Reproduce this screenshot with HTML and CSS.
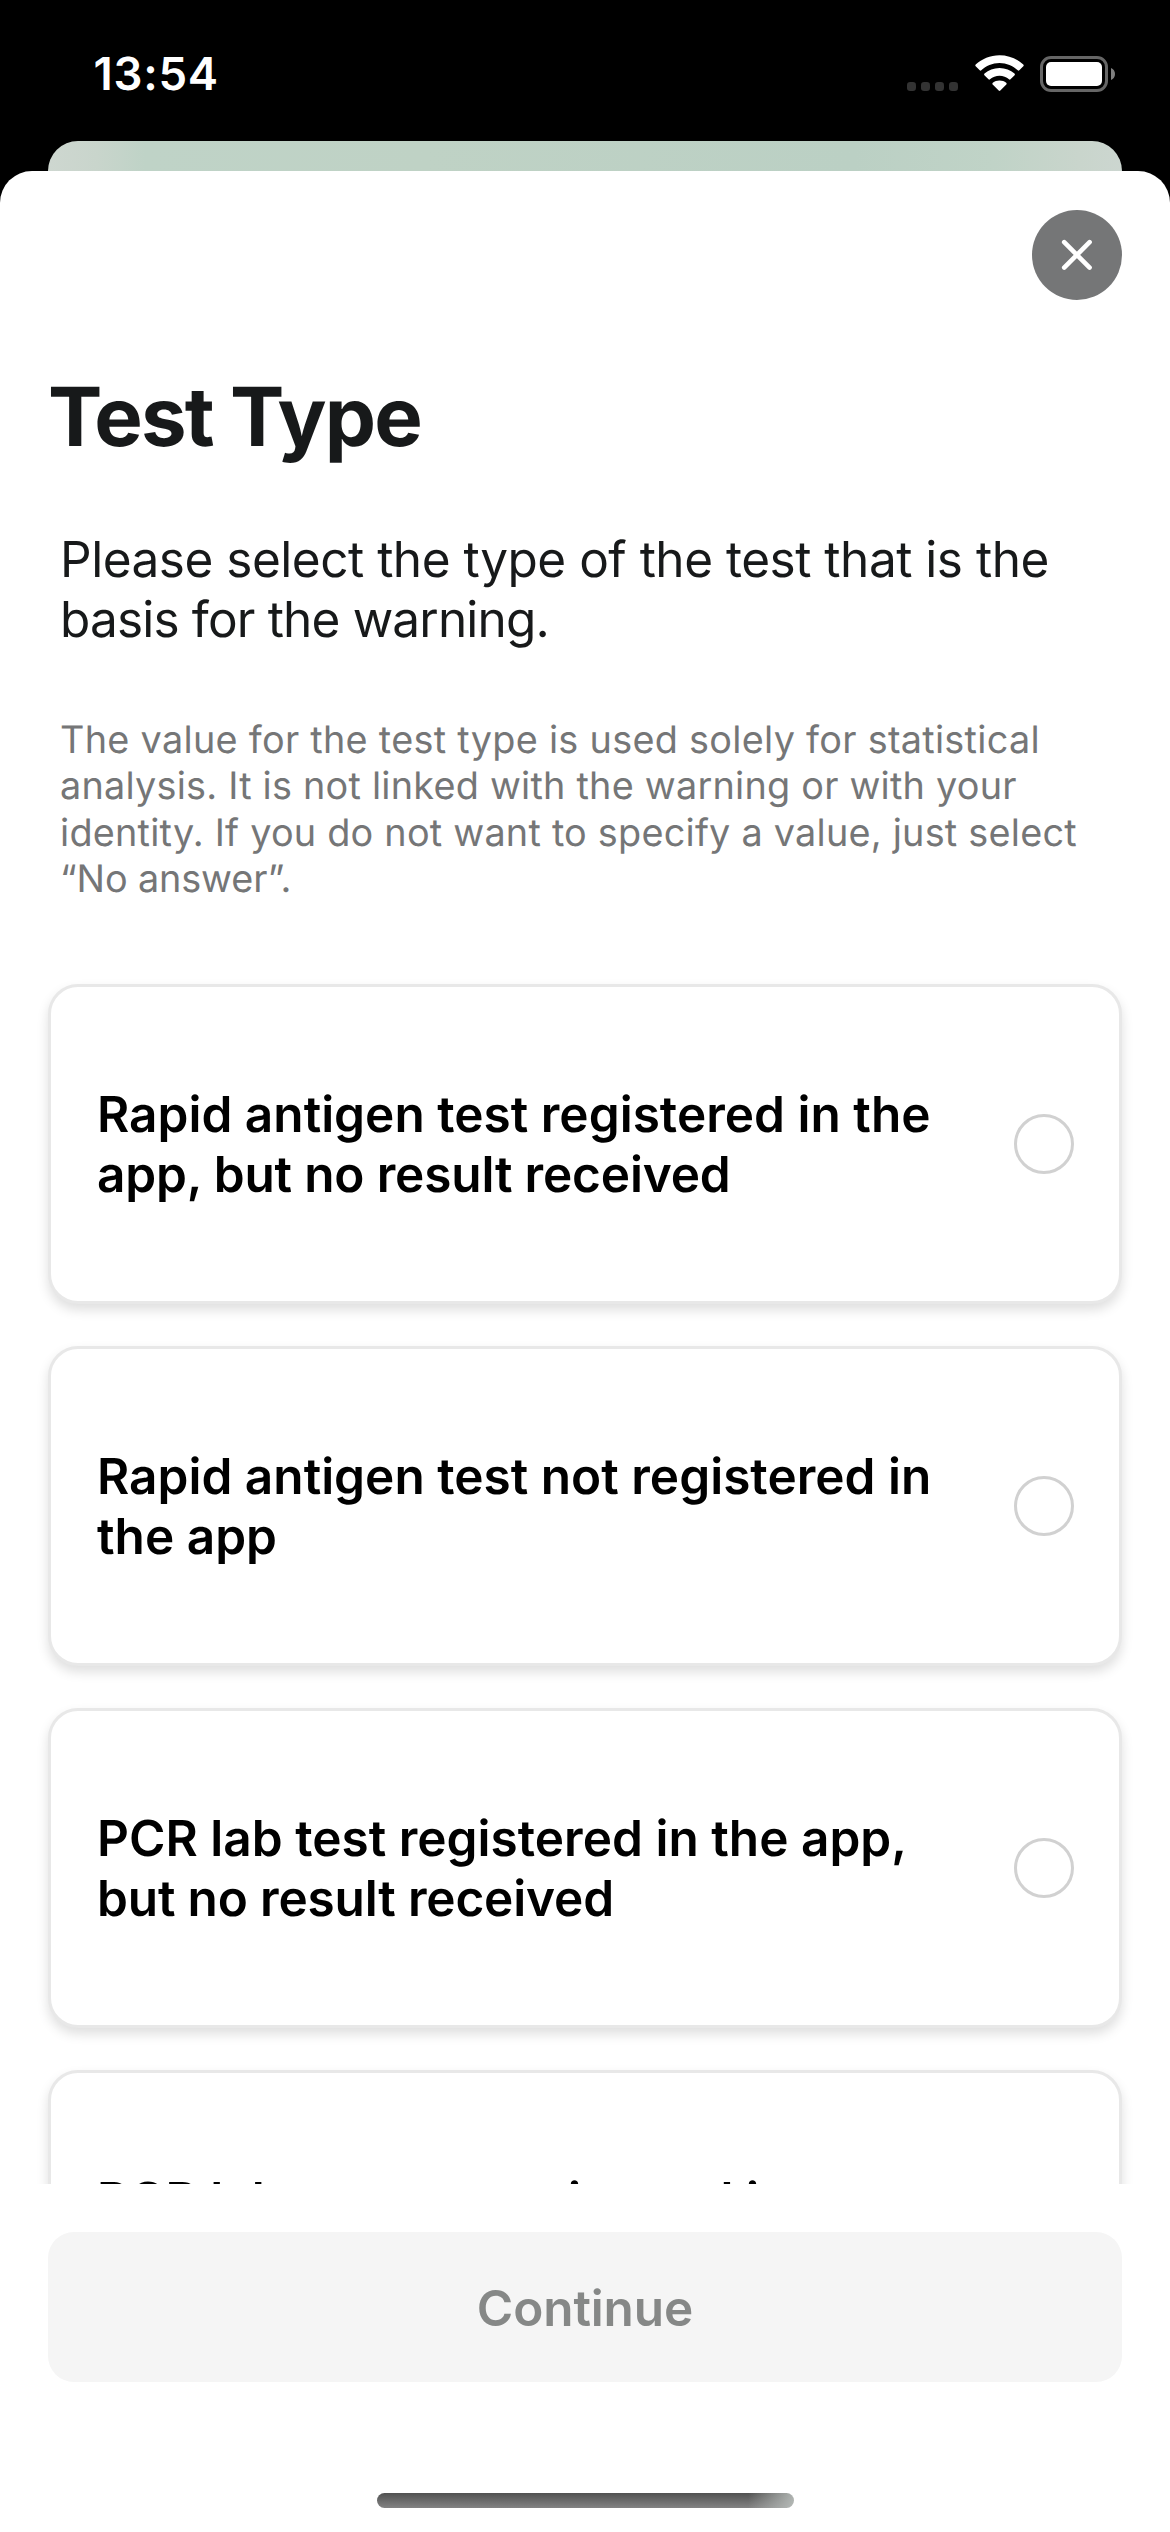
FILE: index.html
```html
<!DOCTYPE html>
<html lang="en">
<head>
<meta charset="utf-8">
<title>Test Type</title>
<link rel="stylesheet" href="styles.css">
</head>
<body>
<div class="screen">
  <header class="status">
    <span class="time">13:54</span>
    <div class="indicators">
      <svg class="dots" width="52" height="9" viewBox="0 0 52 9" fill="#333">
        <rect width="9" height="9" rx="3.2"/><rect x="14" width="9" height="9" rx="3.2"/><rect x="28" width="9" height="9" rx="3.2"/><rect x="42" width="9" height="9" rx="3.2"/>
      </svg>
      <svg class="wifi" width="49" height="37" viewBox="0 0 49 37" fill="#fff">
        <path d="M24.5 0.2C33.8 0.2 42.2 3.8 48.3 9.6Q49.1 10.4 48.3 11.3L44.3 15.3Q43.5 16 42.7 15.3C38 10.7 31.6 7.9 24.5 7.9S11 10.7 6.3 15.3Q5.5 16 4.7 15.3L.7 11.3Q-.1 10.4.7 9.6C6.8 3.8 15.2.2 24.5.2Z"/>
        <path d="M24.5 13C30.3 13 35.5 15.1 39.5 18.6Q40.4 19.5 39.6 20.3L35.5 24.3Q34.8 25 34 24.3C31.4 22.1 28.1 20.8 24.5 20.8S17.6 22.1 15 24.3Q14.2 25 13.5 24.3L9.4 20.3Q8.6 19.5 9.5 18.6C13.5 15.1 18.7 13 24.5 13Z"/>
        <path d="M24.5 25.5C27.1 25.5 29.4 26.3 31.2 27.7Q32.1 28.5 31.3 29.4L25.3 35.5Q24.5 36.3 23.7 35.5L17.7 29.4Q16.9 28.5 17.8 27.7C19.6 26.3 21.9 25.5 24.5 25.5Z"/>
      </svg>
      <svg class="battery" width="75" height="36" viewBox="0 0 75 36">
        <rect x="1.5" y="1.5" width="65" height="33" rx="9.5" fill="none" stroke="#666" stroke-width="3"/>
        <rect x="6" y="6" width="56" height="24" rx="5" fill="#fff"/>
        <path d="M71 12C73.5 13 75 15.3 75 18S73.5 23 71 24Z" fill="#7f7f7f"/>
      </svg>
    </div>
  </header>
  <div class="backdrop"></div>
  <main class="sheet">
    <div class="toolbar">
      <button class="close" aria-label="Close">
        <svg width="90" height="90" viewBox="0 0 90 90" fill="none" stroke="#fff" stroke-width="4.6" stroke-linecap="round"><path d="M32.2 32.2 57.6 57.6M57.6 32.2 32.2 57.6"/></svg>
      </button>
    </div>
    <div class="scroll">
      <h1 class="title">Test Type</h1>
      <p class="lead"><span class="line">Please select the type of the test that is the</span><span class="line line-tight">basis for the warning.</span></p>
      <p class="note"><span class="line line-wide">The value for the test type is used solely for statistical</span><span class="line">analysis. It is not linked with the warning or with your</span><span class="line">identity. If you do not want to specify a value, just select</span><span class="line line-quote">“No answer”.</span></p>
      <div class="options">
        <div class="option"><p class="label"><span class="line">Rapid antigen test registered in the</span><span class="line line-close">app, but no result received</span></p><span class="radio"></span></div>
        <div class="option"><p class="label"><span class="line">Rapid antigen test not registered in</span><span class="line">the app</span></p><span class="radio"></span></div>
        <div class="option"><p class="label"><span class="line">PCR lab test registered in the app,</span><span class="line line-close">but no result received</span></p><span class="radio"></span></div>
        <div class="option"><p class="label"><span class="line">PCR lab test not registered in</span><span class="line">the app</span></p><span class="radio"></span></div>
      </div>
    </div>
    <footer class="footer">
      <button class="continue" disabled>Continue</button>
      <div class="home"></div>
    </footer>
  </main>
</div>
</body>
</html>
```
FILE: styles.css
```css
* { box-sizing: border-box; }
body { margin: 0; background: #000; font-family: Inter, "Liberation Sans", sans-serif; text-rendering: geometricPrecision; }
h1, p { margin: 0; }
button { border: 0; padding: 0; font: inherit; }
svg { display: block; }

.screen { width: 1170px; height: 2532px; display: flex; flex-direction: column; overflow: hidden; background: #000; }

.status { flex: none; height: 141px; padding: 46px 55px 0 93.5px; display: flex; justify-content: space-between; align-items: flex-start; }
.time { font-size: 45.5px; line-height: 56px; font-weight: 600; letter-spacing: .75px; color: #fff; }
.indicators { display: flex; padding-top: 9px; }
.dots { margin: 27px 16px 0 0; }
.wifi { margin-right: 16px; }
.battery { margin-top: 1px; }

.backdrop { flex: none; height: 30px; margin: 0 48px; border-radius: 30px 30px 0 0; background: linear-gradient(90deg, #ced7d0 0, #c9d5cc 4.5%, #bfd3c7 9%, #bfd2c5 35%, #bbd0c4 75%, #c0d3c7 88%, #c9d5cc 96%, #ccd6d0 100%); }

.sheet { flex: 1; min-height: 0; display: flex; flex-direction: column; background: #fff; border-radius: 32px 32px 0 0; }
.toolbar { flex: none; height: 196px; padding: 39px 48px 0; display: flex; justify-content: flex-end; }
.close { width: 90px; height: 90px; border-radius: 50%; background: #757677; }

.scroll { flex: none; height: 1817px; overflow: hidden; padding: 0 48px; }
.title { font-size: 81.5px; line-height: 100px; font-weight: 700; letter-spacing: -1.85px; color: #17191a; }
.line { display: block; white-space: nowrap; }
.lead { margin: 62px 0 0 12px; font-size: 49.5px; line-height: 60px; letter-spacing: -.48px; color: #17191a; }
.line-tight { letter-spacing: -.82px; }
.note { margin: 67.5px 0 0 12px; font-size: 37.8px; line-height: 46.5px; letter-spacing: .23px; color: #757677; }
.line-wide { letter-spacing: .29px; }
.line-quote { letter-spacing: -.12px; }

.options { margin-top: 81.5px; display: flex; flex-direction: column; gap: 42px; }
.option { flex: none; height: 320px; padding: 0 45px 0 46px; display: flex; align-items: center; justify-content: space-between; background: #fff; border: 3px solid #e8e8e8; border-radius: 30px; box-shadow: 0 6px 12px rgba(0, 0, 0, .13); }
.label { font-size: 49.5px; line-height: 60px; font-weight: 600; letter-spacing: .03px; color: #000; }
.line-close { letter-spacing: -.15px; }
.radio { width: 60px; height: 60px; border: 3px solid #d1d1d1; border-radius: 50%; }

.footer { flex: 1; padding: 48px 48px 24px; display: flex; flex-direction: column; justify-content: space-between; }
.continue { height: 150px; padding-top: 1px; border-radius: 26px; background: #f5f5f5; color: #868887; font-size: 49.5px; line-height: 60px; font-weight: 600; letter-spacing: -.1px; }
.home { align-self: center; width: 417px; height: 15px; border-radius: 8px; background: linear-gradient(90deg, transparent 89%, rgba(190, 195, 192, .85) 100%), linear-gradient(#515151, #838383); }
```
